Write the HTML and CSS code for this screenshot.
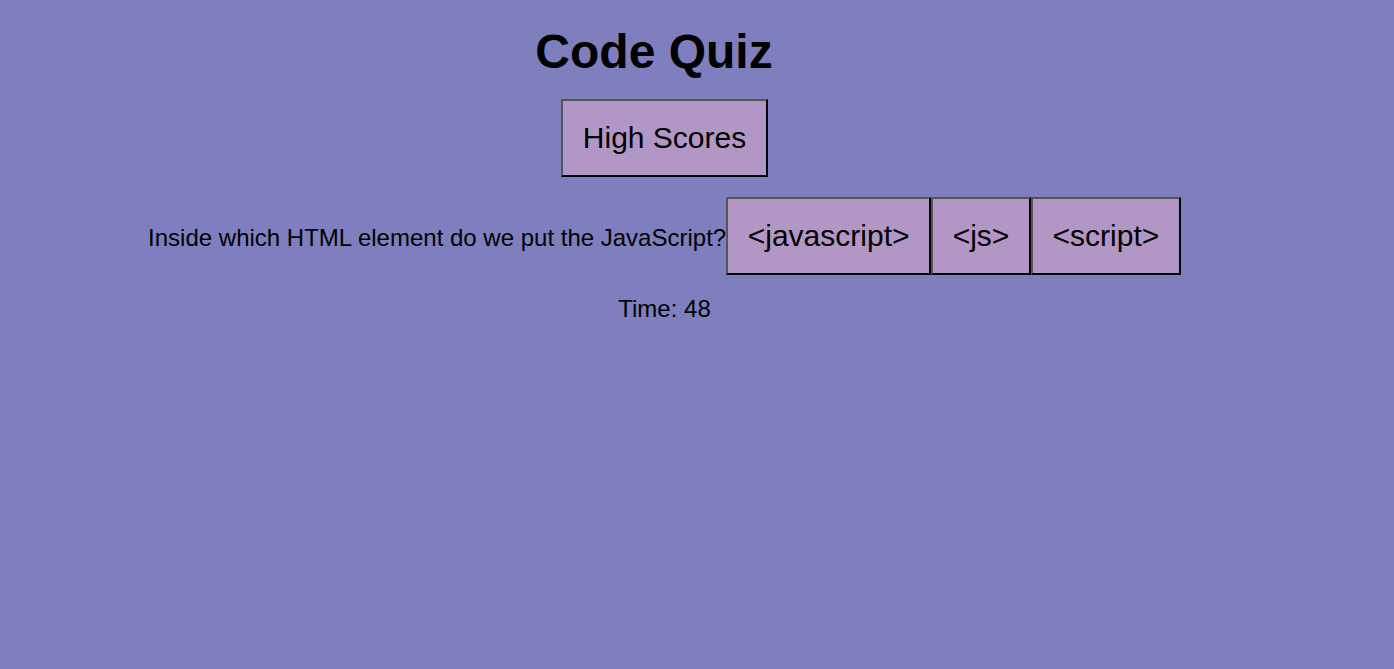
FILE: index.html
```html
<!DOCTYPE html>
<html lang="en">
<head>
<meta charset="utf-8">
<title>Code Quiz</title>
<link rel="stylesheet" href="styles.css">
</head>
<body>
<main class="quiz">
<h1 class="title">Code Quiz</h1>
<button class="btn">High Scores</button>
<div class="question-row"><span class="question">Inside which HTML element do we put the JavaScript?</span><button class="btn">&lt;javascript&gt;</button><button class="btn">&lt;js&gt;</button><button class="btn">&lt;script&gt;</button></div>
<p class="timer">Time: 48</p>
</main>
</body>
</html>
```
FILE: styles.css
```css
html, body {
  margin: 0;
  background: #7f7fbf;
  font-family: "Liberation Sans", Arial, sans-serif;
  color: #000;
}
.quiz {
  width: 1329px;
  padding-top: 24px;
  display: flex;
  flex-direction: column;
  align-items: center;
  gap: 20px;
}
.title {
  margin: 0;
  font-size: 48px;
  font-weight: bold;
  padding-right: 21px;
}
.btn {
  font-family: "Liberation Sans", Arial, sans-serif;
  font-size: 30px;
  padding: 20px 19.6px;
  background: #b296c6;
  color: #000;
  border: 2px outset #767676;
  border-top-color: #555555;
  border-left-color: #555555;
  border-right-color: #111111;
  border-bottom-color: #111111;
  margin: 0;
}
.question-row {
  display: flex;
  align-items: baseline;
}
.question {
  font-size: 24px;
}
.timer {
  margin: 0;
  font-size: 24px;
}
```
